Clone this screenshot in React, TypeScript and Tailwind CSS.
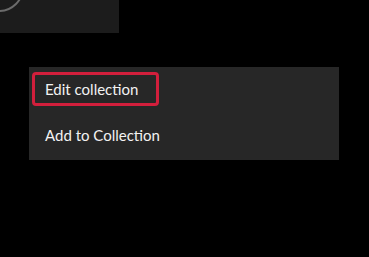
export default function App() {
  return (
    <div className="w-[369px] h-[257px] bg-black overflow-hidden" style={{ fontFamily: 'Lato, "DejaVu Sans", sans-serif' }}>
      {/* thumbnail behind the menu */}
      <div className="relative w-[119px] h-[33px] bg-[#1c1c1c] overflow-hidden">
        <svg className="absolute left-0 top-0" width="40" height="20" viewBox="0 0 40 20">
          <circle cx="-1" cy="-13" r="24" fill="none" stroke="#6b6b6b" strokeWidth="2" />
        </svg>
      </div>

      {/* context menu */}
      <div className="ml-[29px] mt-[34px] w-[310px] h-[93px] bg-[#272727] px-[3px] pt-[5px] flex flex-col items-start">
        <div className="h-[34px] w-[127px] border-[3px] border-[#d21f3c] rounded-[4px] pl-[10px] flex items-center text-[15px] text-[#f2f2f2]">
          Edit collection
        </div>
        <div className="mt-[12px] h-[34px] pl-[13px] flex items-center text-[15px] text-[#f2f2f2]">
          Add to Collection
        </div>
      </div>
    </div>
  );
}
